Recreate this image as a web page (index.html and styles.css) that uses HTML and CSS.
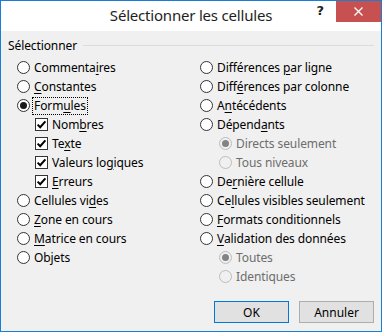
FILE: index.html
```html
<!DOCTYPE html>
<html lang="fr">
<head>
<meta charset="utf-8">
<title>Sélectionner les cellules</title>
<link rel="stylesheet" href="styles.css">
</head>
<body>
<div class="window">
  <div class="titlebar">
    <div></div>
    <div class="title">Sélectionner les cellules</div>
    <div class="controls">
      <span class="help">?</span>
      <span class="close"><svg width="11" height="11" viewBox="0 0 11 11"><path d="M1.5 1.5L9.5 9.5M9.5 1.5L1.5 9.5" stroke="#fff" stroke-width="1.3"/></svg></span>
    </div>
  </div>
  <div class="content">
    <div class="group-head"><span class="group-label">Sélectionner</span><span class="group-line"></span></div>
    <div class="cols">
      <div class="col">
        <div class="row"><span class="radio"></span><span class="lbl">Commenta<u>i</u>res</span></div>
        <div class="row"><span class="radio"></span><span class="lbl"><u>C</u>onstantes</span></div>
        <div class="row"><span class="radio on"></span><span class="lbl focus">Form<u>u</u>les</span></div>
        <div class="row sub"><span class="check"><svg width="11" height="11" viewBox="0 0 11 11"><path d="M1.6 5.6L4.2 8.2L9.4 2.4" fill="none" stroke="#000" stroke-width="2"/></svg></span><span class="lbl">Nom<u>b</u>res</span></div>
        <div class="row sub"><span class="check"><svg width="11" height="11" viewBox="0 0 11 11"><path d="M1.6 5.6L4.2 8.2L9.4 2.4" fill="none" stroke="#000" stroke-width="2"/></svg></span><span class="lbl">Te<u>x</u>te</span></div>
        <div class="row sub"><span class="check"><svg width="11" height="11" viewBox="0 0 11 11"><path d="M1.6 5.6L4.2 8.2L9.4 2.4" fill="none" stroke="#000" stroke-width="2"/></svg></span><span class="lbl">Valeurs lo<u>g</u>iques</span></div>
        <div class="row sub"><span class="check"><svg width="11" height="11" viewBox="0 0 11 11"><path d="M1.6 5.6L4.2 8.2L9.4 2.4" fill="none" stroke="#000" stroke-width="2"/></svg></span><span class="lbl"><u>E</u>rreurs</span></div>
        <div class="row"><span class="radio"></span><span class="lbl">Cellules vi<u>d</u>es</span></div>
        <div class="row"><span class="radio"></span><span class="lbl"><u>Z</u>one en cours</span></div>
        <div class="row"><span class="radio"></span><span class="lbl"><u>M</u>atrice en cours</span></div>
        <div class="row"><span class="radio"></span><span class="lbl">Ob<u>j</u>ets</span></div>
      </div>
      <div class="col">
        <div class="row"><span class="radio"></span><span class="lbl">Différences <u>p</u>ar ligne</span></div>
        <div class="row"><span class="radio"></span><span class="lbl">Diff<u>é</u>rences par colonne</span></div>
        <div class="row"><span class="radio"></span><span class="lbl">A<u>n</u>técédents</span></div>
        <div class="row"><span class="radio"></span><span class="lbl">Dépend<u>a</u>nts</span></div>
        <div class="row sub disabled"><span class="radio on"></span><span class="lbl">Directs seulement</span></div>
        <div class="row sub disabled"><span class="radio"></span><span class="lbl">Tous niveaux</span></div>
        <div class="row"><span class="radio"></span><span class="lbl">De<u>r</u>nière cellule</span></div>
        <div class="row"><span class="radio"></span><span class="lbl">Ce<u>l</u>lules visibles seulement</span></div>
        <div class="row"><span class="radio"></span><span class="lbl"><u>F</u>ormats conditionnels</span></div>
        <div class="row"><span class="radio"></span><span class="lbl"><u>V</u>alidation des données</span></div>
        <div class="row sub disabled"><span class="radio on"></span><span class="lbl">Toutes</span></div>
        <div class="row sub disabled"><span class="radio"></span><span class="lbl">Identiques</span></div>
      </div>
    </div>
    <div class="buttons">
      <button class="btn default">OK</button>
      <button class="btn">Annuler</button>
    </div>
  </div>
</div>
</body>
</html>
```

FILE: styles.css
```css
* { box-sizing: border-box; }
html, body { margin: 0; padding: 0; }
body {
  width: 382px;
  height: 332px;
  font-family: "Noto Sans", "Open Sans", sans-serif;
  font-size: 12px;
  color: #000;
}
.window {
  width: 382px;
  height: 332px;
  border: 1px solid #1a7fd4;
  display: flex;
  flex-direction: column;
  background: #f0f0f0;
}
.titlebar {
  height: 30px;
  background: #fff;
  display: grid;
  grid-template-columns: 1fr auto 1fr;
  align-items: start;
}
.title {
  font-size: 15px;
  letter-spacing: -0.2px;
  line-height: 30px;
  color: #1e1e1e;
  margin-top: -1px;
}
.controls {
  display: flex;
  justify-content: flex-end;
  align-items: flex-start;
}
.help {
  font-family: "DejaVu Sans", sans-serif;
  font-weight: bold;
  font-size: 13px;
  line-height: 20px;
  color: #222;
  margin-right: 12px;
}
.close {
  width: 45px;
  height: 21px;
  background: #c75050;
  display: flex;
  align-items: center;
  justify-content: center;
}
.close svg { display: block; }
.content {
  flex: 1;
  display: flex;
  flex-direction: column;
  padding: 7px 7px 8px 7px;
}
.group-head {
  display: flex;
  align-items: center;
  height: 16px;
}
.group-label { line-height: 16px; padding-right: 6px; letter-spacing: -0.1px; }
.group-line {
  flex: 1;
  height: 1px;
  background: #dcdcdc;
  margin-top: -1px;
}
.cols {
  display: grid;
  grid-template-columns: 183px 1fr;
  padding-left: 9px;
  margin-top: 4px;
}
.row {
  display: flex;
  align-items: center;
  height: 19px;
  gap: 4px;
}
.row.sub { padding-left: 18px; }
.col:nth-child(2) .row.sub { padding-left: 19px; }
.lbl { line-height: 16px; white-space: nowrap; letter-spacing: -0.1px; }
.lbl u { text-underline-offset: 2px; }
.focus {
  outline: 1px dotted #000;
  outline-offset: 0;
  padding: 0 1px;
  margin-left: -1px;
}
.radio {
  width: 13px;
  height: 13px;
  border-radius: 50%;
  border: 1px solid #333;
  background: #fff;
  flex: none;
  display: flex;
  align-items: center;
  justify-content: center;
}
.radio.on::after {
  content: "";
  width: 7px;
  height: 7px;
  border-radius: 50%;
  background: #1a1a1a;
}
.check {
  width: 13px;
  height: 13px;
  border: 1px solid #333;
  background: #fff;
  flex: none;
  display: flex;
  align-items: center;
  justify-content: center;
}
.check svg { display: block; }
.disabled .lbl { color: #6d6d6d; }
.disabled .radio { border-color: #bcbcbc; background: #f0f0f0; }
.disabled .radio.on::after { background: #838383; }
.buttons {
  margin-top: auto;
  display: flex;
  justify-content: flex-end;
  gap: 10px;
}
.btn {
  width: 75px;
  height: 22px;
  font-family: inherit;
  font-size: 12px;
  color: #000;
  background: #e1e1e1;
  border: 1px solid #adadad;
  padding: 0;
}
.btn.default { border-color: #0078d7; }
```
